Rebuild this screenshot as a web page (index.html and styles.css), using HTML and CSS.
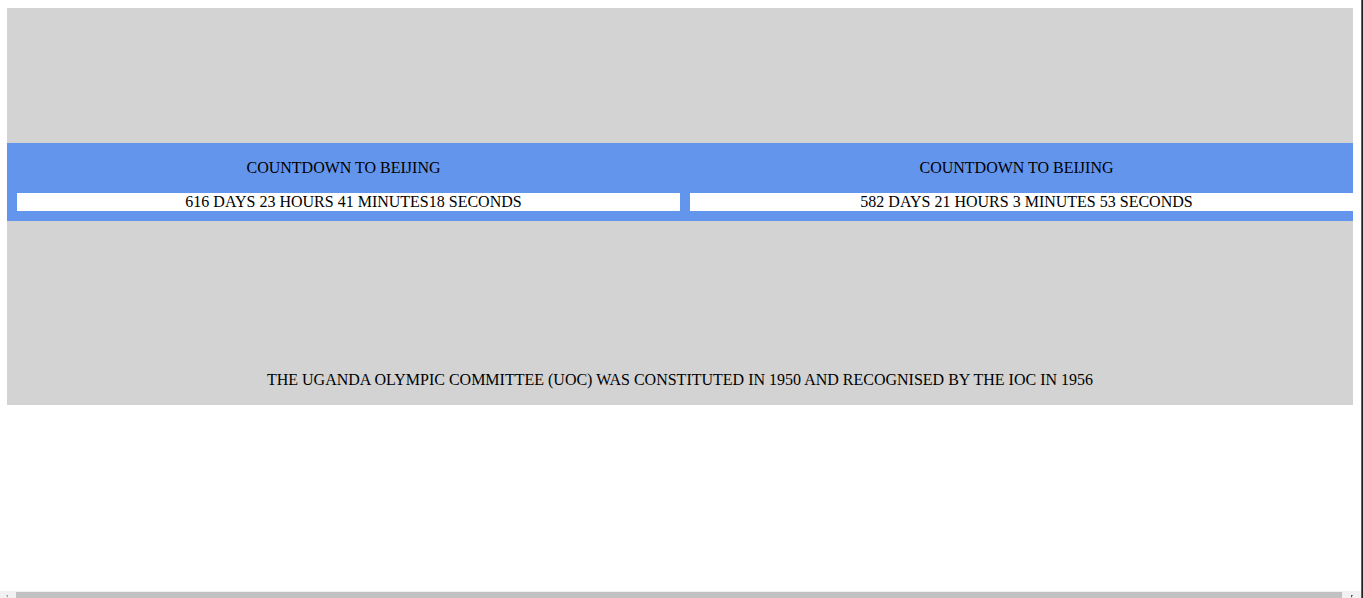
FILE: index.html
```html
<!DOCTYPE html>
<html>
<head>
<meta charset="utf-8">
<title>Uganda Olympic Committee</title>
<link rel="stylesheet" href="styles.css">
</head>
<body>
<div class="page">
  <div class="banner"></div>
  <div class="countdowns">
    <div class="col">
      <div class="title">COUNTDOWN TO BEIJING</div>
      <div class="timer">616 DAYS 23 HOURS 41 MINUTES18 SECONDS</div>
    </div>
    <div class="col">
      <div class="title">COUNTDOWN TO BEIJING</div>
      <div class="timer">582 DAYS 21 HOURS 3 MINUTES 53 SECONDS</div>
    </div>
  </div>
  <div class="footer">THE UGANDA OLYMPIC COMMITTEE (UOC) WAS CONSTITUTED IN 1950 AND RECOGNISED BY THE IOC IN 1956</div>
</div>
<div class="hscroll">
  <span class="arrow arrow-left"></span>
  <span class="thumb"></span>
  <span class="arrow arrow-right"></span>
</div>
<div class="edge"></div>
</body>
</html>
```

FILE: styles.css
```css
html, body {
  background: #ffffff;
}
body {
  margin: 8px 0 0 7px;
  min-width: 1370px;
  font-family: "Liberation Serif", "Times New Roman", serif;
  font-size: 16px;
  line-height: 18px;
  color: #000000;
}
.page {
  width: 1346px;
  background: #d3d3d3;
}
.banner {
  height: 135px;
}
.countdowns {
  display: flex;
  background: #6495ed;
}
.col {
  flex: none;
  width: 673px;
  background: #6495ed;
  padding-bottom: 10px;
}
.title {
  text-align: center;
  padding: 16px 0 16px;
}
.timer {
  width: 673px;
  margin-left: 10px;
  background: #ffffff;
  text-align: center;
}
.footer {
  text-align: center;
  padding: 150px 0 16px;
}

/* partially visible horizontal scrollbar along the bottom edge */
.hscroll {
  position: fixed;
  left: 0;
  bottom: 0;
  width: 1361px;
  height: 7px;
  background: #f1f1f1;
}
.thumb {
  position: absolute;
  left: 16px;
  top: 1px;
  width: 1326px;
  height: 6px;
  background: #c1c1c1;
}
.arrow {
  position: absolute;
  bottom: 0;
  width: 0;
  height: 0;
  border-style: solid;
}
.arrow-left {
  left: 6px;
  border-width: 0 2px 3px 0;
  border-color: transparent #a3a3a3 transparent transparent;
}
.arrow-right {
  left: 1351px;
  border-width: 0 0 3px 2px;
  border-color: transparent transparent transparent #505050;
}
.edge {
  position: fixed;
  top: 0;
  right: 0;
  width: 1px;
  height: 100%;
  border-left: 1px solid #1f6fc4;
  background: #202020;
}
```
